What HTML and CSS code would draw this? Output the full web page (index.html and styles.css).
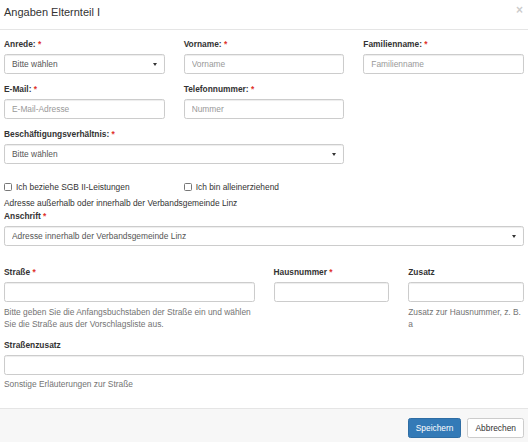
FILE: index.html
```html
<!DOCTYPE html>
<html lang="de">
<head>
    <meta charset="UTF-8">
    <meta name="viewport" content="width=device-width, initial-scale=1.0">
    <title>Angaben Elternteil I</title>
    <link rel="stylesheet" href="styles.css">
</head>
<body>
    <div class="modal">
        <div class="modal-header">
            <h4 class="modal-title">Angaben Elternteil I</h4>
            <span class="close">&times;</span>
        </div>

        <div class="modal-body">
            <div class="row row-3">
                <div class="form-group">
                    <label>Anrede: <span class="req">*</span></label>
                    <div class="select-wrap">
                        <select class="form-control"><option>Bitte wählen</option></select>
                    </div>
                </div>
                <div class="form-group">
                    <label>Vorname: <span class="req">*</span></label>
                    <input class="form-control" type="text" placeholder="Vorname">
                </div>
                <div class="form-group">
                    <label>Familienname: <span class="req">*</span></label>
                    <input class="form-control" type="text" placeholder="Familienname">
                </div>

                <div class="form-group">
                    <label>E-Mail: <span class="req">*</span></label>
                    <input class="form-control" type="text" placeholder="E-Mail-Adresse">
                </div>
                <div class="form-group">
                    <label>Telefonnummer: <span class="req">*</span></label>
                    <input class="form-control" type="text" placeholder="Nummer">
                </div>
                <div></div>

                <div class="form-group span-2">
                    <label>Beschäftigungsverhältnis: <span class="req">*</span></label>
                    <div class="select-wrap">
                        <select class="form-control"><option>Bitte wählen</option></select>
                    </div>
                </div>
                <div></div>
            </div>

            <div class="row row-3 checks">
                <label class="check"><input type="checkbox"> Ich beziehe SGB II-Leistungen</label>
                <label class="check"><input type="checkbox"> Ich bin alleinerziehend</label>
            </div>

            <p class="note">Adresse außerhalb oder innerhalb der Verbandsgemeinde Linz</p>
            <div class="form-group anschrift">
                <label>Anschrift <span class="req">*</span></label>
                <div class="select-wrap">
                    <select class="form-control"><option>Adresse innerhalb der Verbandsgemeinde Linz</option></select>
                </div>
            </div>

            <div class="row row-4 address">
                <div class="form-group span-2">
                    <label>Straße <span class="req">*</span></label>
                    <input class="form-control" type="text">
                    <p class="help">Bitte geben Sie die Anfangsbuchstaben der Straße ein und wählen Sie die Straße aus der Vorschlagsliste aus.</p>
                </div>
                <div class="form-group">
                    <label>Hausnummer <span class="req">*</span></label>
                    <input class="form-control" type="text">
                </div>
                <div class="form-group">
                    <label>Zusatz</label>
                    <input class="form-control" type="text">
                    <p class="help">Zusatz zur Hausnummer, z. B. a</p>
                </div>
            </div>

            <div class="form-group last">
                <label>Straßenzusatz</label>
                <input class="form-control" type="text">
                <p class="help">Sonstige Erläuterungen zur Straße</p>
            </div>
        </div>

        <div class="modal-footer">
            <button class="btn btn-primary">Speichern</button>
            <button class="btn btn-default">Abbrechen</button>
        </div>
    </div>
</body>
</html>
```

FILE: styles.css
```css
* {
    padding: 0;
    margin: 0;
    box-sizing: border-box;
}
body {
    background-color: #fff;
    font-family: "Liberation Sans", Arial, sans-serif;
    font-size: 8.4px;
    line-height: 12px;
    color: #333;
}
.modal {
    width: 528px;
    height: 442px;
    display: flex;
    flex-direction: column;
}
.modal-header {
    position: relative;
    padding: 4px 4px 9px;
    border-bottom: 1px solid #e5e5e5;
}
.modal-title {
    font-size: 11px;
    line-height: 16px;
    font-weight: normal;
    color: #333;
}
.close {
    position: absolute;
    top: 3px;
    right: 5px;
    font-size: 12px;
    font-weight: bold;
    line-height: 14px;
    color: #000;
    opacity: 0.2;
}
.modal-body {
    flex: 1;
    padding: 8px 4px 0;
}
.row {
    display: grid;
    column-gap: 19px;
}
.row-3 {
    grid-template-columns: repeat(3, 1fr);
}
.row-4 {
    grid-template-columns: repeat(4, 1fr);
}
.span-2 {
    grid-column: span 2;
}
.form-group {
    margin-bottom: 9px;
}
label {
    display: block;
    font-weight: bold;
    margin-bottom: 4px;
}
.req {
    color: #e0332b;
}
.form-control {
    display: block;
    width: 100%;
    height: 20px;
    padding: 0 7px;
    font-family: inherit;
    font-size: 8.4px;
    color: #555;
    background-color: #fff;
    border: 1px solid #ccc;
    border-radius: 2.4px;
    box-shadow: inset 0 1px 1px rgba(0, 0, 0, 0.075);
    outline: none;
}
.form-control::placeholder {
    color: #999;
}
select.form-control {
    appearance: none;
    -webkit-appearance: none;
}
.select-wrap {
    position: relative;
}
.select-wrap::after {
    content: '';
    position: absolute;
    right: 8px;
    top: 9px;
    border-left: 2.5px solid transparent;
    border-right: 2.5px solid transparent;
    border-top: 3px solid #333;
}
.checks {
    margin-top: 8px;
}
.check {
    display: flex;
    align-items: center;
    font-weight: normal;
    margin-bottom: 0;
}
.check input {
    appearance: none;
    -webkit-appearance: none;
    width: 8px;
    height: 8px;
    margin: 0 4px 0 0;
    border: 1px solid #777;
    border-radius: 1.5px;
    background: #fff;
}
.note {
    margin-top: 4px;
}
.anschrift {
    margin-top: 1px;
}
.address {
    margin-top: 20px;
}
.help {
    margin-top: 4px;
    color: #737373;
}
.last .help {
    margin-top: 3px;
}
.modal-footer {
    display: flex;
    justify-content: flex-end;
    gap: 6px;
    height: 34px;
    padding: 9px 4px 0;
    background-color: #f7f7f7;
    border-top: 1px solid #e5e5e5;
}
.btn {
    height: 20px;
    padding: 0 7px;
    font-family: inherit;
    font-size: 8.4px;
    border: 1px solid transparent;
    border-radius: 2.4px;
}
.btn-primary {
    color: #fff;
    background-color: #337ab7;
    border-color: #2e6da4;
}
.btn-default {
    color: #333;
    background-color: #fff;
    border-color: #ccc;
}
```
